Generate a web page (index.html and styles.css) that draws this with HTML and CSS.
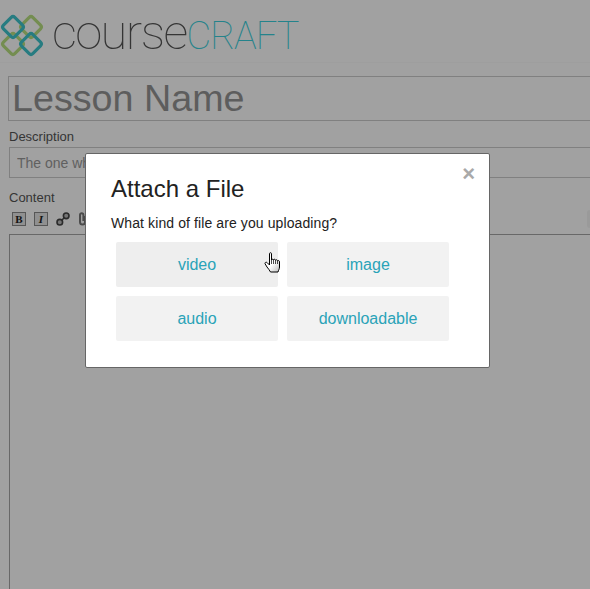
FILE: index.html
```html
<!DOCTYPE html>
<html lang="en">
<head>
  <meta charset="UTF-8" />
  <title>CourseCraft</title>
  <link rel="stylesheet" href="styles.css">
</head>
<body>
  <div class="header">
    <svg class="logo-mark" width="46" height="46" viewBox="0 0 46 46" fill="none" stroke-width="3.2">
      <rect class="green" x="23" y="6" width="16" height="16" rx="2.5" transform="rotate(45 31 14)"/>
      <rect class="green" x="5" y="23" width="16" height="16" rx="2.5" transform="rotate(45 13 31)"/>
      <rect class="teal" x="5" y="6" width="16" height="16" rx="2.5" transform="rotate(45 13 14)"/>
      <rect class="teal" x="23" y="23" width="16" height="16" rx="2.5" transform="rotate(45 31 31)"/>
    </svg>
    <div class="logo-text">course<span>CRAFT</span></div>
  </div>

  <div class="form">
    <input class="lesson-name" type="text" placeholder="Lesson Name" />
    <label>Description</label>
    <input class="desc" type="text" placeholder="The one who" />
    <label class="content-label">Content</label>
    <div class="toolbar">
      <span class="tool bold">B</span>
      <span class="tool italic">I</span>
      <svg class="tool-icon" width="14" height="14" viewBox="0 0 14 14" fill="#bbb" stroke="#444" stroke-width="1.600">
        <circle cx="3.800" cy="10.200" r="2.800"/>
        <circle cx="10.200" cy="3.800" r="2.800"/>
        <path d="M5.500 8.500l3-3"/>
      </svg>
      <svg class="tool-icon" width="9" height="14" viewBox="0 0 9 14" fill="none" stroke="#777" stroke-width="2">
        <path d="M7 4v6a2.500 2.500 0 0 1-5 0V3a1.700 1.700 0 0 1 3.400 0v6"/>
      </svg>
      <span class="tool-right"></span>
    </div>
    <div class="editor"></div>
  </div>

  <div class="overlay"></div>

  <div class="modal">
    <span class="close">×</span>
    <h2>Attach a File</h2>
    <p>What kind of file are you uploading?</p>
    <div class="file-types">
      <a class="hovered">video</a>
      <a>image</a>
      <a>audio</a>
      <a>downloadable</a>
    </div>
    <svg class="cursor" width="17" height="22" viewBox="0 0 16 22">
      <defs>
        <linearGradient id="palm" x1="0" y1="0" x2="1" y2="1">
          <stop offset=".55" stop-color="#fff"/>
          <stop offset="1" stop-color="#bbb"/>
        </linearGradient>
      </defs>
      <path d="M5 1.500c0-1 2-1 2 0V8c0-1 2-1 2 0 0-1 2-1 2 .3 0-.8 2-.8 2 .5.5-.6 2-.4 2 1V15c0 2-1 3-1.500 5H6c-1-2-2-3-3.500-5L.7 12c-.8-1.200.8-2.500 2-1.300L5 13V1.500z" fill="url(#palm)" stroke="#000" stroke-width="1" stroke-linejoin="round"/>
      <path d="M7 8v4M9 8v4M11 8.300V12M13 9v3" stroke="#000" stroke-width=".7"/>
    </svg>
  </div>
</body>
</html>
```

FILE: styles.css
```css
html, body {
  margin: 0;
  padding: 0;
  height: 100%;
  overflow: hidden;
  background: #fff;
  font-family: "Liberation Sans", Arial, sans-serif;
}
* { box-sizing: border-box; }

.header {
  display: flex;
  align-items: flex-start;
  height: 63px;
  border-bottom: 1px solid #fbfbfb;
}

.logo-mark { flex: none; margin-top: 13px; }
.logo-mark .green { stroke: #b8e080; }
.logo-mark .teal { stroke: #3fc4cc; }

.logo-text {
  margin: 3px 0 0 6px;
  font-family: Roboto, sans-serif;
  font-weight: 100;
  font-size: 49px;
  line-height: 60px;
  letter-spacing: -1.600px;
  white-space: nowrap;
  color: #555;
}
.logo-text span {
  font-size: 38px;
  letter-spacing: -1px;
  color: #3ad0dc;
}

.form {
  width: 620px;
  padding: 13px 0 0 9px;
}

input {
  display: block;
  width: 100%;
  background: #fff;
  border: 1px solid #cbcbcb;
  font-family: inherit;
}

.lesson-name {
  height: 45px;
  margin-left: -1px;
  padding: 0 3px;
  font-size: 37.700px;
}
.lesson-name::placeholder { color: #949494; opacity: 1; }

label {
  display: block;
  margin-top: 8px;
  font-size: 13px;
  line-height: 16px;
  color: #555;
}

.desc {
  height: 31px;
  margin-top: 2px;
  padding: 0 7px;
  font-size: 14px;
}
.desc::placeholder { color: #999; opacity: 1; }

.content-label { margin-top: 12px; }

.toolbar {
  display: flex;
  align-items: center;
  gap: 8px;
  height: 20px;
  margin-top: 3px;
  padding-left: 3px;
}

.tool {
  width: 14px;
  height: 14px;
  border: 1px solid #888;
  background: #e4e4e4;
  text-align: center;
  font-family: "Liberation Serif", serif;
  font-size: 11px;
  line-height: 12px;
  color: #222;
}
.bold { font-weight: bold; }
.italic { font-style: italic; font-weight: bold; }

.tool-right {
  width: 33px;
  height: 18px;
  margin-left: auto;
  background: #f4f4f4;
  border-radius: 3px;
}

.editor {
  height: 400px;
  margin-top: 5px;
  border: 1px solid #a5a5a5;
}

.overlay {
  position: fixed;
  top: 0;
  left: 0;
  width: 100%;
  height: 100%;
  background: rgba(0, 0, 0, .37);
}

.modal {
  position: absolute;
  top: 153px;
  left: 85px;
  width: 405px;
  height: 215px;
  padding: 21px 25px 0;
  background: #fff;
  border: 1px solid #666;
  border-radius: 2px;
}

.close {
  position: absolute;
  top: 7px;
  right: 14px;
  font-size: 22px;
  font-weight: bold;
  line-height: 26px;
  color: #a9a9a9;
}

.modal h2 {
  margin: 0;
  font-weight: normal;
  font-size: 24px;
  line-height: 28px;
  color: #222;
}

.modal p {
  margin: 11px 0 0;
  font-size: 14px;
  line-height: 18px;
  letter-spacing: .1px;
  color: #222;
}

.file-types {
  display: grid;
  grid-template-columns: 162px 162px;
  gap: 9px;
  margin: 10px 0 0 5px;
}

.file-types a {
  height: 45px;
  background: #f2f2f2;
  border-radius: 2px;
  text-align: center;
  font-size: 16px;
  line-height: 45px;
  color: #2aa3b8;
}
.file-types a.hovered { background: #eeeeee; }

.cursor {
  position: absolute;
  top: 98px;
  left: 178px;
}
```
